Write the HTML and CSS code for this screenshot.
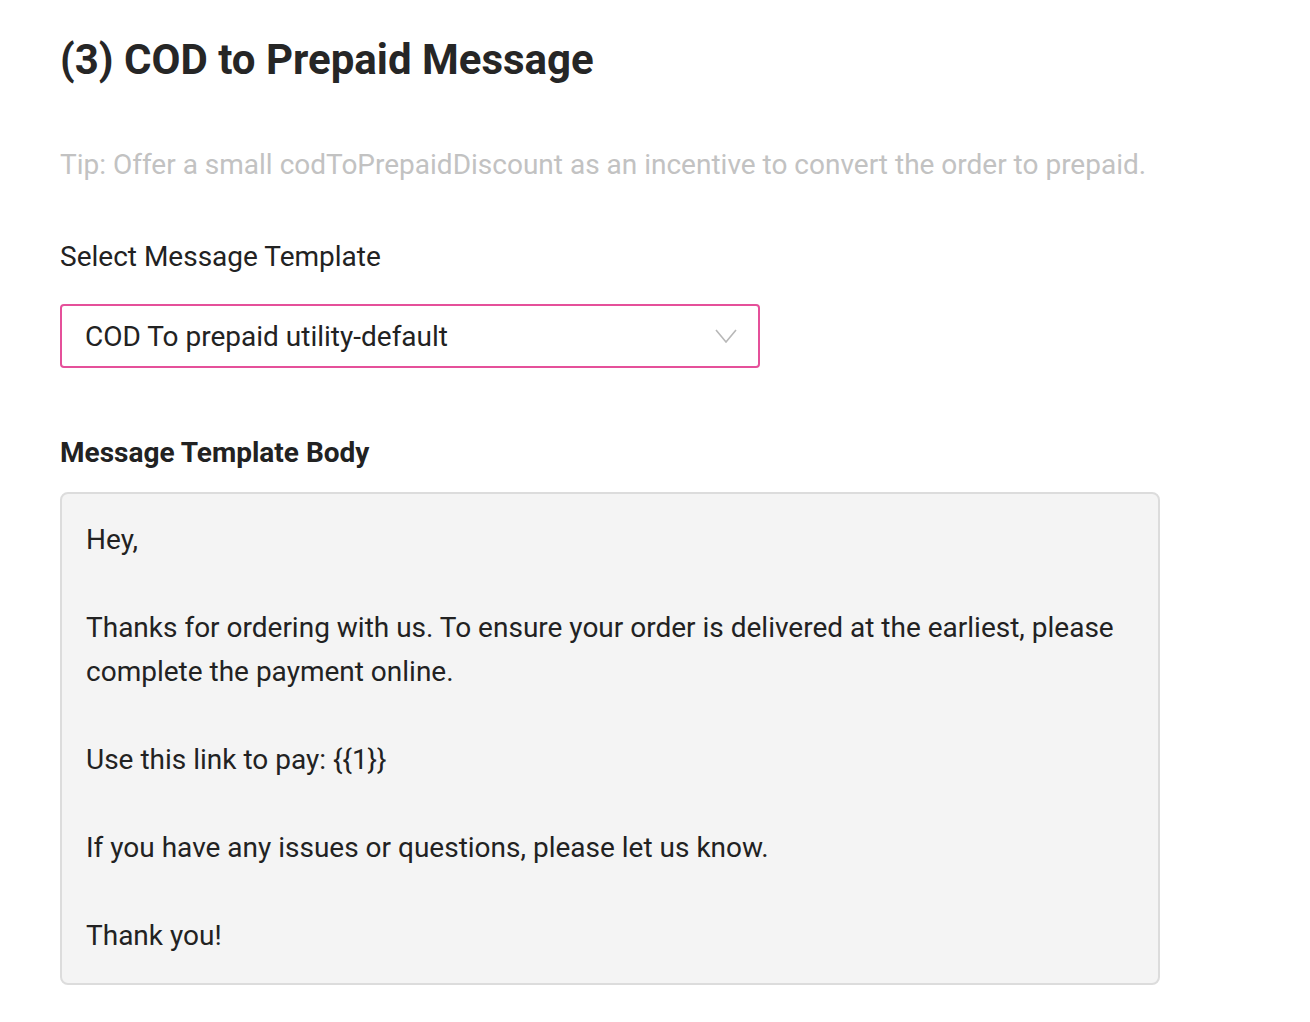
FILE: index.html
```html
<!DOCTYPE html>
<html>
<head>
<meta charset="utf-8">
<link rel="stylesheet" href="styles.css">
</head>
<body>
<main class="page">
  <h1 class="title">(3) COD to Prepaid Message</h1>
  <p class="tip">Tip: Offer a small codToPrepaidDiscount as an incentive to convert the order to prepaid.</p>
  <label class="field-label">Select Message Template</label>
  <div class="select">
    <span class="select-value">COD To prepaid utility-default</span>
    <svg class="chevron" width="22" height="14" viewBox="0 0 22 14"><path d="M1 1 L11 13 L21 1" fill="none" stroke="#b8b8b8" stroke-width="1.6"/></svg>
  </div>
  <h2 class="body-label">Message Template Body</h2>
  <div class="template-body">
    <p>Hey,</p>
    <p>Thanks for ordering with us. To ensure your order is delivered at the earliest, please complete the payment online.</p>
    <p>Use this link to pay: {{1}}</p>
    <p>If you have any issues or questions, please let us know.</p>
    <p>Thank you!</p>
  </div>
</main>
</body>
</html>
```

FILE: styles.css
```css
* { box-sizing: border-box; }
html, body { margin: 0; padding: 0; background: #fff; }
body { font-family: Roboto, "Noto Sans", sans-serif; color: #222; }
.page { padding: 34px 60px 0 60px; display: flex; flex-direction: column; align-items: flex-start; }
.title { margin: 0; font-size: 42px; font-weight: 700; line-height: 52px; color: #262626; }
.tip { margin: 62px 0 0 0; font-size: 28px; line-height: 34px; color: #c2c2c2; }
.field-label { margin-top: 58px; font-size: 28px; line-height: 34px; color: #222; }
.select { margin-top: 30px; width: 700px; height: 64px; border: 2px solid #e5509a; border-radius: 4px; display: flex; align-items: center; justify-content: space-between; padding: 0 21px 0 23px; }
.select-value { font-size: 28px; color: #222; }
.chevron { display: block; }
.body-label { margin: 68px 0 0 0; font-size: 28px; font-weight: 700; line-height: 34px; color: #222; }
.template-body { margin-top: 22px; width: 1100px; background: #f4f4f4; border: 2px solid #dcdcdc; border-radius: 8px; padding: 24px 24px 25px 24px; font-size: 28px; line-height: 44px; color: #222; }
.template-body p { margin: 0 0 44px 0; }
.template-body p:last-child { margin-bottom: 0; }
```
